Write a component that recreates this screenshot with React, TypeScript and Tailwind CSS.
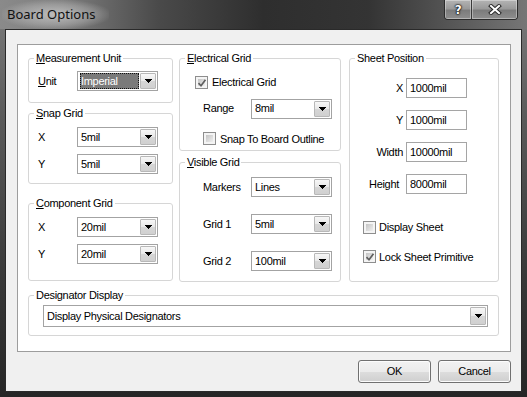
import React from "react";

function Arrow() {
  return (
    <svg width="7" height="4" viewBox="0 0 7 4" shapeRendering="crispEdges">
      <rect x="0" y="0" width="7" height="1" fill="#000" />
      <rect x="1" y="1" width="5" height="1" fill="#000" />
      <rect x="2" y="2" width="3" height="1" fill="#000" />
      <rect x="3" y="3" width="1" height="1" fill="#000" />
    </svg>
  );
}

function Combo({ value, className, selected }: { value: string; className: string; selected?: boolean }) {
  return (
    <div className={`flex items-stretch border border-[#a3a3a3] bg-white shrink-0 ${className}`}>
      <div className="flex-1 flex items-stretch min-w-0 py-[1px] pl-[2px] pr-[1px]">
        {selected ? (
          <span className="flex items-center w-full bg-[#7a7a7a] text-white outline outline-1 outline-dotted outline-[#111] -outline-offset-1 pl-[1px]">
            {value}
          </span>
        ) : (
          <span className="flex items-center pl-[1px]">{value}</span>
        )}
      </div>
      <div className="w-[16px] my-[1px] mr-[1px] border border-[#b8b8b8] rounded-[1px] bg-[linear-gradient(180deg,#f7f7f7_0%,#e8e8e8_50%,#d6d6d6_51%,#d0d0d0_100%)] flex items-center justify-center">
        <Arrow />
      </div>
    </div>
  );
}

function Check({ checked }: { checked?: boolean }) {
  return (
    <div className="relative w-[13px] h-[13px] border border-[#8e8e8e] bg-[#f4f4f4] p-[2px] shrink-0">
      <div className="w-full h-full bg-[linear-gradient(135deg,#c4c4c4_0%,#dedede_60%,#efefef_100%)]" />
      {checked && (
        <svg className="absolute left-[1px] top-[1px]" width="10" height="10" viewBox="0 0 10 10">
          <path d="M1.5 5.2 L4 7.8 L8.5 1.8" fill="none" stroke="#5e5e5e" strokeWidth="1.7" />
        </svg>
      )}
    </div>
  );
}

function TextBox({ value }: { value: string }) {
  return (
    <div className="w-[61px] h-[20px] border border-[#a5a5a5] bg-white flex items-center pl-[3px] shrink-0">{value}</div>
  );
}

function Group({ title, className, children }: { title: React.ReactNode; className: string; children?: React.ReactNode }) {
  return (
    <fieldset className={`border border-[#d6d6d6] rounded-[3px] min-w-0 shrink-0 ${className}`}>
      <legend className="ml-[5px] px-[2px] leading-[13px] h-[13px]">{title}</legend>
      {children}
    </fieldset>
  );
}

function U({ children }: { children: React.ReactNode }) {
  return <span className="underline underline-offset-[1px]">{children}</span>;
}

function Btn({ children }: { children: React.ReactNode }) {
  return (
    <div className="w-[73px] h-[23px] rounded-[3px] border border-[#707070] bg-[linear-gradient(180deg,#f2f2f2_0%,#ebebeb_50%,#dddddd_51%,#cfcfcf_100%)] shadow-[inset_0_0_0_1px_#fcfcfc] flex items-center justify-center">
      {children}
    </div>
  );
}

export default function App() {
  return (
    <div className="w-[527px] h-[397px] overflow-hidden flex flex-col bg-[linear-gradient(180deg,#7c7c7c_0%,#5a5a5a_30%,#383838_70%,#262626_100%)] font-['Liberation_Sans',Arial,sans-serif] text-[11px] tracking-[-0.3px] text-black">
      {/* title bar */}
      <div className="h-[29px] shrink-0 flex items-start bg-[linear-gradient(90deg,#8a8a8a_0%,#7e7e7e_12%,#4a4a4a_30%,#2e2e2e_50%,#343434_70%,#555555_85%,#767676_100%)]">
        <div className="ml-[2px] pl-[5px] pr-[14px] h-[29px] flex items-center bg-[radial-gradient(ellipse_at_center,rgba(210,210,210,0.75)_0%,rgba(190,190,190,0.4)_50%,rgba(160,160,160,0)_75%)] font-['Noto_Sans',sans-serif] text-[13px] tracking-normal text-[#111]">
          Board Options
        </div>
        <div className="ml-auto mr-[9px] flex h-[20px] rounded-b-[4px] border border-t-0 border-[#2c2c2c] overflow-hidden">
          <div className="w-[27px] h-full border-r border-[#3a3a3a] bg-[linear-gradient(180deg,#b4b4b4_0%,#9a9a9a_45%,#7c7c7c_55%,#8e8e8e_100%)] shadow-[inset_0_0_0_1px_rgba(255,255,255,0.35)] flex items-center justify-center font-['DejaVu_Sans',sans-serif] font-bold text-[12px] text-white [text-shadow:0_0_1px_#000,0_0_2px_#000,0_0_2px_#000]">
            ?
          </div>
          <div className="w-[45px] h-full bg-[linear-gradient(180deg,#b4b4b4_0%,#9a9a9a_45%,#7c7c7c_55%,#8e8e8e_100%)] shadow-[inset_0_0_0_1px_rgba(255,255,255,0.35)] flex items-center justify-center">
            <svg width="14" height="11" viewBox="0 0 14 11">
              <path d="M3 2 L11 9 M11 2 L3 9" stroke="#2a2a2a" strokeWidth="4" strokeLinecap="square" />
              <path d="M3 2 L11 9 M11 2 L3 9" stroke="#fff" strokeWidth="2" strokeLinecap="square" />
            </svg>
          </div>
        </div>
      </div>

      {/* client */}
      <div className="ml-[5px] w-[517px] h-[363px] shrink-0 border border-[#2a2a2a] bg-[#f0f0f0] flex flex-col">
        <div className="ml-[11px] mt-[14px] w-[494px] h-[308px] shrink-0 border border-[#9d9d9d] bg-white pl-[10px] pr-[11px] pt-[7px] flex flex-col">
          <div className="flex gap-[6px] h-[230px] shrink-0">
            {/* left column */}
            <div className="w-[145px] flex flex-col">
              <Group title={<><U>M</U>easurement Unit</>} className="h-[51px]">
                <div className="flex items-center pl-[9px] mt-[6px]">
                  <span className="w-[39px]"><U>U</U>nit</span>
                  <Combo value="Imperial" className="w-[81px] h-[20px]" selected />
                </div>
              </Group>
              <Group title={<><U>S</U>nap Grid</>} className="h-[77px] mt-[4px]">
                <div className="flex flex-col gap-[7px] mt-[7px]">
                  <div className="flex items-center pl-[9px]">
                    <span className="w-[39px]">X</span>
                    <Combo value="5mil" className="w-[81px] h-[20px]" />
                  </div>
                  <div className="flex items-center pl-[9px]">
                    <span className="w-[39px]">Y</span>
                    <Combo value="5mil" className="w-[81px] h-[20px]" />
                  </div>
                </div>
              </Group>
              <Group title={<><U>C</U>omponent Grid</>} className="h-[84px] mt-[13px]">
                <div className="flex flex-col gap-[7px] mt-[7px]">
                  <div className="flex items-center pl-[9px]">
                    <span className="w-[39px]">X</span>
                    <Combo value="20mil" className="w-[81px] h-[20px]" />
                  </div>
                  <div className="flex items-center pl-[9px]">
                    <span className="w-[39px]">Y</span>
                    <Combo value="20mil" className="w-[81px] h-[20px]" />
                  </div>
                </div>
              </Group>
            </div>

            {/* middle column */}
            <div className="w-[162px] flex flex-col">
              <Group title={<><U>E</U>lectrical Grid</>} className="h-[99px]">
                <div className="flex flex-col">
                  <div className="flex items-center gap-[4px] pl-[15px] mt-[9px]">
                    <Check checked />
                    <span>Electrical Grid</span>
                  </div>
                  <div className="flex items-center pl-[23px] mt-[8px]">
                    <span className="w-[48px]">Range</span>
                    <Combo value="8mil" className="w-[81px] h-[20px]" />
                  </div>
                  <div className="flex items-center gap-[4px] pl-[23px] mt-[12px]">
                    <Check />
                    <span>Snap To Board Outline</span>
                  </div>
                </div>
              </Group>
              <Group title={<><U>V</U>isible Grid</>} className="h-[126px] mt-[5px]">
                <div className="flex flex-col gap-[17px] mt-[8px]">
                  <div className="flex items-center pl-[23px]">
                    <span className="w-[48px]">Markers</span>
                    <Combo value="Lines" className="w-[81px] h-[20px]" />
                  </div>
                  <div className="flex items-center pl-[23px]">
                    <span className="w-[48px]">Grid 1</span>
                    <Combo value="5mil" className="w-[81px] h-[20px]" />
                  </div>
                  <div className="flex items-center pl-[23px]">
                    <span className="w-[48px]">Grid 2</span>
                    <Combo value="100mil" className="w-[81px] h-[20px]" />
                  </div>
                </div>
              </Group>
            </div>

            {/* right column */}
            <div className="w-[150px] flex flex-col ml-[2px]">
              <Group title="Sheet Position" className="h-[230px]">
                <div className="flex flex-col gap-[12px] mt-[13px]">
                  <div className="flex items-center">
                    <span className="w-[53px] text-right">X</span>
                    <span className="w-[3px]" />
                    <TextBox value="1000mil" />
                  </div>
                  <div className="flex items-center">
                    <span className="w-[53px] text-right">Y</span>
                    <span className="w-[3px]" />
                    <TextBox value="1000mil" />
                  </div>
                  <div className="flex items-center">
                    <span className="w-[53px] text-right">Width</span>
                    <span className="w-[3px]" />
                    <TextBox value="10000mil" />
                  </div>
                  <div className="flex items-center">
                    <span className="w-[53px] text-right pr-[4px]">Height</span>
                    <span className="w-[3px]" />
                    <TextBox value="8000mil" />
                  </div>
                </div>
                <div className="flex flex-col gap-[13px] mt-[25px] pl-[13px]">
                  <div className="flex items-center gap-[3px]">
                    <Check />
                    <span>Display Sheet</span>
                  </div>
                  <div className="flex items-center gap-[3px]">
                    <Check checked />
                    <span>Lock Sheet Primitive</span>
                  </div>
                </div>
              </Group>
            </div>
          </div>

          <Group title="Designator Display" className="h-[47px] mt-[7px]">
            <div className="ml-[14px] mr-[10px] mt-[3px]">
              <Combo value="Display Physical Designators" className="w-full h-[22px]" />
            </div>
          </Group>
        </div>

        <div className="flex justify-end gap-[7px] mt-[8px] mr-[10px]">
          <Btn>OK</Btn>
          <Btn>Cancel</Btn>
        </div>
      </div>
    </div>
  );
}
